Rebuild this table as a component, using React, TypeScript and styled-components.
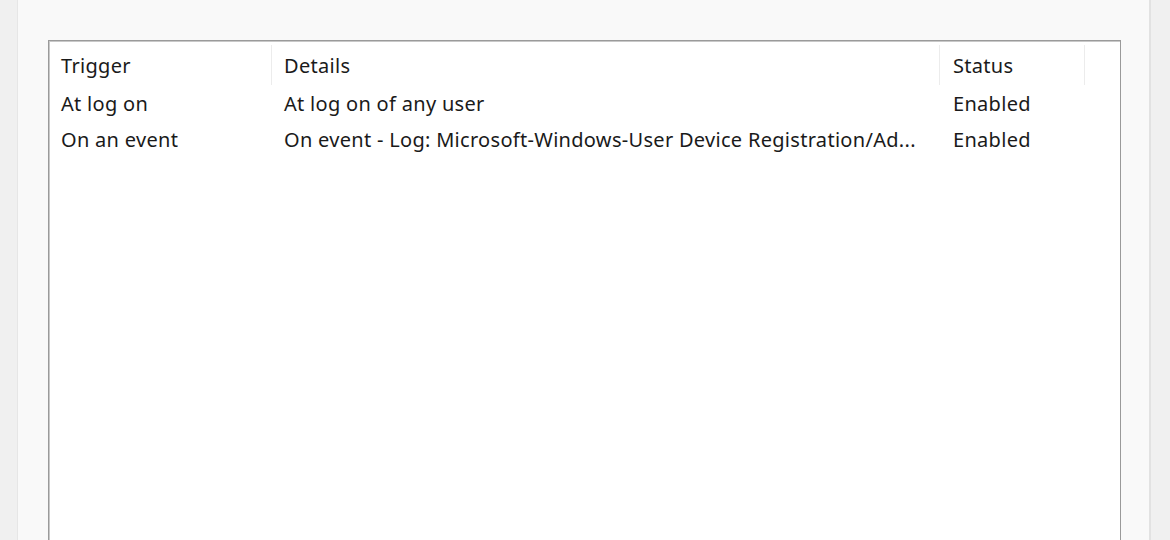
import React from "react";
import styled, { createGlobalStyle } from "styled-components";

const Global = createGlobalStyle`
  html, body { margin: 0; padding: 0; background: #f0f0f0; }
  body { font-family: "Segoe UI", "Noto Sans", "Open Sans", sans-serif; }
`;

const Page = styled.div`
  width: 1170px;
  height: 540px;
  display: flex;
  background: #f0f0f0;
  overflow: hidden;
`;

const Panel = styled.div`
  margin-left: 17px;
  width: 1134px;
  height: 540px;
  box-sizing: border-box;
  background: #f9f9f9;
  border-left: 1px solid #e6e6e6;
  border-right: 2px solid #e2e2e2;
  padding: 40px 0 0 30px;
`;

const TableBox = styled.div`
  width: 1073px;
  height: 520px;
  box-sizing: border-box;
  background: #ffffff;
  border: 1px solid #9a9a9a;
  box-shadow: inset 1px 1px 0 #c8c8c8;
  display: flex;
  flex-direction: column;
`;

const Row = styled.div<{ $header?: boolean }>`
  display: grid;
  grid-template-columns: 223px 668px 145px 1fr;
  height: ${(p) => (p.$header ? "44px" : "36px")};
  align-items: center;
  font-size: 20px;
  letter-spacing: 0.3px;
  color: #1a1a1a;
  padding-top: ${(p) => (p.$header ? "4px" : "0")};
  box-sizing: border-box;
`;

const Cell = styled.div<{ $header?: boolean; $pad: number }>`
  height: 100%;
  display: flex;
  align-items: center;
  padding-left: ${(p) => p.$pad}px;
  white-space: nowrap;
  overflow: hidden;
  border-right: ${(p) => (p.$header ? "1px solid #ececec" : "none")};
  box-sizing: border-box;
`;

const EmptyCell = styled.div``;

const pads = [12, 12, 13];

const rows = [
  ["At log on", "At log on of any user", "Enabled"],
  [
    "On an event",
    "On event - Log: Microsoft-Windows-User Device Registration/Ad...",
    "Enabled",
  ],
];

export default function App() {
  return (
    <>
      <Global />
      <Page>
        <Panel>
          <TableBox>
            <Row $header>
              {["Trigger", "Details", "Status"].map((h, i) => (
                <Cell key={h} $header $pad={pads[i]}>
                  {h}
                </Cell>
              ))}
              <EmptyCell />
            </Row>
            {rows.map((r, ri) => (
              <Row key={ri}>
                {r.map((c, i) => (
                  <Cell key={i} $pad={pads[i]}>
                    {c}
                  </Cell>
                ))}
                <EmptyCell />
              </Row>
            ))}
          </TableBox>
        </Panel>
      </Page>
    </>
  );
}
